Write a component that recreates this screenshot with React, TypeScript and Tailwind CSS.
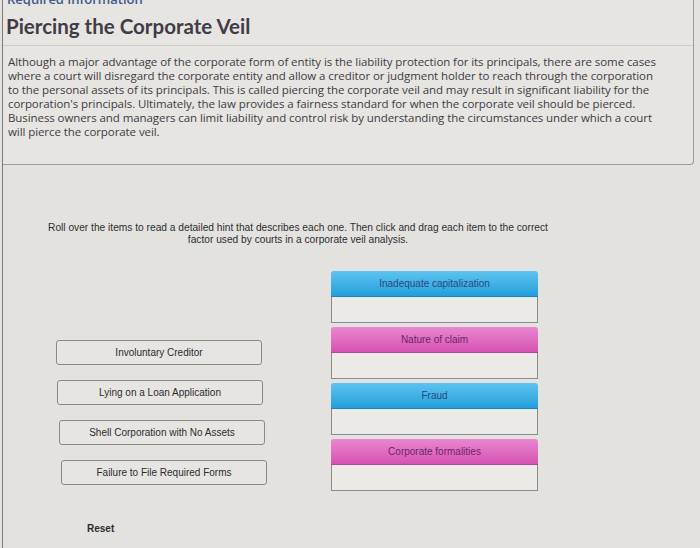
const factors = [
  { label: "Inadequate capitalization", tone: "blue" },
  { label: "Nature of claim", tone: "pink" },
  { label: "Fraud", tone: "blue" },
  { label: "Corporate formalities", tone: "pink" },
];

const items = [
  { label: "Involuntary Creditor", indent: "ml-[0px]" },
  { label: "Lying on a Loan Application", indent: "ml-[1px]" },
  { label: "Shell Corporation with No Assets", indent: "ml-[3px]" },
  { label: "Failure to File Required Forms", indent: "ml-[5px]" },
];

const lines = [
  "Although a major advantage of the corporate form of entity is the liability protection for its principals, there are some cases",
  "where a court will disregard the corporate entity and allow a creditor or judgment holder to reach through the corporation",
  "to the personal assets of its principals. This is called piercing the corporate veil and may result in significant liability for the",
  "corporation's principals. Ultimately, the law provides a fairness standard for when the corporate veil should be pierced.",
  "Business owners and managers can limit liability and control risk by understanding the circumstances under which a court",
  "will pierce the corporate veil.",
];

const DropTarget = ({ label, tone }: { label: string; tone: string }) => {
  const head =
    tone === "blue"
      ? "bg-gradient-to-b from-[#5cc3f1] to-[#1f9fdb] text-[#27497c] border-[#1b86bd]"
      : "bg-gradient-to-b from-[#ea86d0] to-[#d552b3] text-[#6a2668] border-[#b9449c]";
  return (
    <div className="flex flex-col">
      <div
        className={`h-[26px] rounded-t-[3px] border-b flex items-center justify-center text-[10px] ${head}`}
      >
        {label}
      </div>
      <div className="h-[26px] bg-[#ebeae6] border border-t-0 border-[#8c8b88]" />
    </div>
  );
};

const App = () => {
  return (
    <div className="w-[700px] h-[548px] overflow-hidden bg-[#e3e2de] font-['Liberation_Sans',Arial,sans-serif]">
      <div className="ml-[2px] h-full border-l border-[#7d7c78]">
        <div className="mr-[6px] h-[165px] border-r border-b border-[#9d9c98] rounded-br-[4px] bg-[#e6e5e1] flex flex-col">
          <div className="h-[6px] overflow-hidden">
            <div className="-mt-[8px] pl-[4px] text-[13px] leading-[14px] font-semibold text-[#3d5a8c] font-['Open_Sans',sans-serif]">
              Required Information
            </div>
          </div>
          <div className="h-[40px] border-b border-[#cfcecb] flex items-center pl-[3px] pt-[2px]">
            <h1 className="text-[20.5px] font-bold text-[#413c48] font-['Lato',sans-serif]">
              Piercing the Corporate Veil
            </h1>
          </div>
          <div className="pt-[9px] pl-[5px] text-[11.5px] leading-[14px] text-[#3f3c44] font-['Open_Sans',sans-serif] tracking-[-0.08px] whitespace-nowrap">
            {lines.map((l) => (
              <div key={l}>{l}</div>
            ))}
          </div>
        </div>

        <div className="pt-[57px] w-[590px] text-center text-[10.2px] leading-[12px] text-[#2e2e30]">
          <div>
            Roll over the items to read a detailed hint that describes each one. Then click and drag each item to the correct
          </div>
          <div>factor used by courts in a corporate veil analysis.</div>
        </div>

        <div className="flex pt-[25px]">
          <div className="w-[328px] pl-[53px] pt-[69px] flex flex-col gap-[15px]">
            {items.map((it) => (
              <div
                key={it.label}
                className={`${it.indent} w-[206px] h-[25px] rounded-[3px] border border-[#8a8986] bg-[#e6e5e1] flex items-center justify-center text-[10px] text-[#2c2c2e]`}
              >
                {it.label}
              </div>
            ))}
            <div className="pt-[21px] pl-[31px] text-[10px] font-bold text-[#2c2c2e]">Reset</div>
          </div>
          <div className="w-[207px] flex flex-col gap-[4px]">
            {factors.map((f) => (
              <DropTarget key={f.label} label={f.label} tone={f.tone} />
            ))}
          </div>
        </div>
      </div>
    </div>
  );
};

export default App;
